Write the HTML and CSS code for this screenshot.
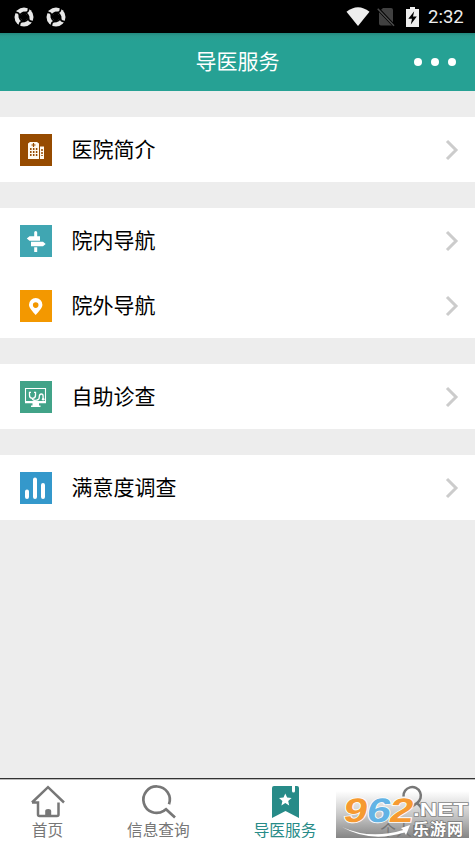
FILE: index.html
```html
<!DOCTYPE html>
<html lang="zh-CN">
<head>
<meta charset="utf-8">
<title>导医服务</title>
<link rel="stylesheet" href="styles.css">
</head>
<body>
<div class="app">
  <div class="status">
    <svg class="notif" viewBox="0 0 20 20"><use href="#swirl"/></svg>
    <svg class="notif" viewBox="0 0 20 20"><g id="swirl"><circle cx="10" cy="10" r="9.5" fill="#e8e8e8"/><path d="M10 4.8L15 10L10 15.2L5 10Z" fill="#000"/><g fill="none" stroke="#000" stroke-width="1.7"><path id="gap" d="M5.500 10.500Q6 5 12.500 5.300Q15 4.500 14.500 0"/><use href="#gap" transform="rotate(90 10 10)"/><use href="#gap" transform="rotate(180 10 10)"/><use href="#gap" transform="rotate(270 10 10)"/></g></g></svg>
    <span class="spacer"></span>
    <svg class="wifi" viewBox="0 0 24 19"><path d="M.5 4.8Q12-4.3 23.5 4.8L12 19Z" fill="#eee"/></svg>
    <svg class="sim" viewBox="0 0 18 20"><path d="M6 1H14Q16 1 16 3V16L3 3.8Z M2 5L15.5 18.5H4Q2 18.5 2 16.5Z" fill="#414141"/><path d="M.7 1.3L17 18.7" stroke="#000" stroke-width="3"/><path d="M.7 1.8L17 18.7" stroke="#4c4c4c" stroke-width="1.5"/></svg>
    <svg class="battery" viewBox="0 0 13 20"><path d="M4 0H9V2H13V20H0V2H4Z" fill="#eee"/><path d="M8.2 4.2L2.3 11.8H6L4.8 17.4L10.8 9.4H7Z" fill="#000"/></svg>
    <span class="clock">2:32</span>
  </div>
  <header class="header">
    <h1>导医服务</h1>
    <div class="more"><i></i><i></i><i></i></div>
  </header>
  <main class="content">
    <section class="group">
      <div class="row">
        <svg class="icon brown" viewBox="0 0 32 32"><path d="M8 25V9.5L10 8H17L19 9.5V25ZM20 25V12.5H24V25Z" fill="#fffaf0"/><path d="M13.5 9v4M11.5 11h4" stroke="#964b00" stroke-width="1.2"/><path d="M10.8 14v8M13.7 14v8M16.6 14v8M22 15v7" stroke="#964b00" stroke-width="1.5" stroke-dasharray="2 1"/></svg>
        <span class="label">医院简介</span>
        <svg class="arrow" viewBox="0 0 14 22"><path d="M2 2L11 11L2 20"/></svg>
      </div>
    </section>
    <section class="group">
      <div class="row">
        <svg class="icon cyan" viewBox="0 0 32 32"><path d="M14.2 7.5Q14.2 6 15.7 6T17.2 7.5V11.3H20V15.7H9.5L6.8 13.5L9.5 11.3H14.2ZM11 16.7H23L25.7 19L23 21.2H11ZM14.2 22.2H17.2V27H14.2Z" fill="#fff"/></svg>
        <span class="label">院内导航</span>
        <svg class="arrow" viewBox="0 0 14 22"><path d="M2 2L11 11L2 20"/></svg>
      </div>
      <div class="row">
        <svg class="icon orange" viewBox="0 0 32 32"><path fill-rule="evenodd" d="M15.7 25C12.7 21.4 9 18 9 14.7A6.7 6.7 0 0 1 22.4 14.7C22.4 18 18.7 21.4 15.7 25ZM15.7 12.3A2.8 2.8 0 1 0 15.7 17.9A2.8 2.8 0 1 0 15.7 12.3Z" fill="#fff"/></svg>
        <span class="label">院外导航</span>
        <svg class="arrow" viewBox="0 0 14 22"><path d="M2 2L11 11L2 20"/></svg>
      </div>
    </section>
    <section class="group">
      <div class="row">
        <svg class="icon green" viewBox="0 0 32 32"><path d="M5.5 7.5H25.5V20.5H5.5Z" fill="none" stroke="#fff" stroke-width="1.1"/><path d="M5 20H26V22.3H19V24.5H20.5V26H11V24.5H12.5V22.3H5Z" fill="#fff"/><path d="M11 11.3H9.5V14.3Q9.5 17.4 12.5 17.4T15.5 14.3V11.3H14M12.5 17.4V18.3Q14 20 17 19Q19.3 18.7 19.3 16V15.3Q19.5 13 21.3 13T23.1 15V18" fill="none" stroke="#fff" stroke-width="1.3"/><circle cx="23.2" cy="18.2" r="1.3" fill="#fff"/></svg>
        <span class="label">自助诊查</span>
        <svg class="arrow" viewBox="0 0 14 22"><path d="M2 2L11 11L2 20"/></svg>
      </div>
    </section>
    <section class="group">
      <div class="row">
        <svg class="icon blue" viewBox="0 0 32 32"><path d="M7 19.4V25M15 7.4V25M23 13V25" stroke="#fff" stroke-width="4" stroke-linecap="round"/></svg>
        <span class="label">满意度调查</span>
        <svg class="arrow" viewBox="0 0 14 22"><path d="M2 2L11 11L2 20"/></svg>
      </div>
    </section>
  </main>
  <nav class="tabs">
    <div class="tab first">
      <svg viewBox="0 0 36 36"><path d="M2 18.5L18 3.2L34 18.5M2 18.5H8V30.5Q8 32 9.5 32H27Q28.5 32 28.5 30.5V18.5" fill="none" stroke="#777" stroke-width="2.5"/><path d="M15.2 31V27Q15.2 25 18.2 25T21.2 27V31Z" fill="#777"/></svg>
      <span>首页</span>
    </div>
    <div class="tab">
      <svg viewBox="0 0 36 36"><path d="M29 20.2A13.2 13.2 0 1 0 23.7 26.8L26 25.2L35 33.6" fill="none" stroke="#777" stroke-width="2.7"/></svg>
      <span>信息查询</span>
    </div>
    <div class="tab active">
      <svg viewBox="0 0 36 36"><path d="M7 2H25V7Q25 8.5 26.5 8.5T28 7V2H30Q32 2 32 4V34L18.5 27L5 34V4Q5 2 7 2Z" fill="#278b88"/><path d="M18.3 9.5L20.1 13.6L24.6 14L21.2 17L22.2 21.4L18.3 19.1L14.4 21.4L15.4 17L12 14L16.5 13.6Z" fill="#fff"/></svg>
      <span>导医服务</span>
    </div>
    <div class="tab">
      <svg viewBox="0 0 36 36"><path d="M9.5 12.5A8.7 8.7 0 1 1 23 19Q18 23 8 28M23 19Q29 24 31 33" fill="none" stroke="#777" stroke-width="2.5"/></svg>
      <span>个人中心</span>
    </div>
  </nav>
  <svg class="watermark" viewBox="0 0 134 47">
    <defs><linearGradient id="shade" x2="0" y2="1"><stop stop-color="#777" stop-opacity="0"/><stop offset=".5" stop-color="#777" stop-opacity=".4"/><stop offset="1" stop-color="#747474" stop-opacity=".88"/></linearGradient></defs>
    <path d="M0 0H133V47H0Z" fill="url(#shade)"/>
    <g class="digits"><text transform="translate(6 31) skewX(-10)" textLength="24" lengthAdjust="spacingAndGlyphs" fill="#f69a31">9</text><text transform="translate(29.5 31) skewX(-10)" textLength="24" lengthAdjust="spacingAndGlyphs" fill="#62b3e5">6</text><text transform="translate(52 31) skewX(-10)" textLength="24" lengthAdjust="spacingAndGlyphs" fill="#f69a31">2</text></g>
    <path d="M6 36Q34 49 67 39L65 37L74 34L70 44L68.500 41.500Q34 52 6 36Z" fill="#fff"/>
    <text class="net" x="77" y="25" textLength="55" lengthAdjust="spacingAndGlyphs">.NET</text>
    <text class="site" x="77" y="43.500" textLength="50">乐游网</text>
  </svg>
</div>
</body>
</html>
```
FILE: styles.css
```css
* { box-sizing: border-box; }
body { margin: 0; font-family: "Noto Sans CJK SC", sans-serif; }
.app { position: relative; width: 475px; height: 844px; display: flex; flex-direction: column; background: #ededed; overflow: hidden; }
.status { height: 33px; background: #000; display: flex; align-items: center; padding: 0 11px 0 14px; flex: none; }
.notif { width: 20px; height: 20px; margin-right: 12px; }
.spacer { flex: 1; }
.wifi { width: 24px; height: 19px; }
.sim { width: 18px; height: 20px; margin-left: 7px; }
.battery { width: 13px; height: 20px; margin: 0 9px 0 11px; }
.clock { width: 36px; color: #eee; font: 18.5px/33px Roboto, sans-serif; padding-top: 2px; white-space: nowrap; }
.header { height: 58px; background: linear-gradient(#23897e 0, #2a9b8f 3px, #26a194 8px); position: relative; flex: none; }
h1 { margin: 0; color: #fff; font-size: 21px; font-weight: 400; line-height: 54px; text-align: center; }
.more { position: absolute; right: 19px; top: 25px; display: flex; gap: 9px; }
.more i { width: 8px; height: 8px; border-radius: 50%; background: #fff; }
.content { flex: 1; padding-top: 26px; display: flex; flex-direction: column; gap: 26.2px; }
.group { background: #fff; }
.row { height: 64.8px; display: flex; align-items: center; padding: 1.4px 16px 0 20px; }
.icon { width: 32px; height: 32px; margin-right: 19.5px; }
.brown { background: #964b00; }
.cyan { background: #40a6b2; }
.orange { background: #f39800; }
.green { background: #41a388; }
.blue { background: #3498cb; }
.label { flex: 1; color: #000; font-size: 21px; line-height: 30px; padding-bottom: 4px; }
.arrow { width: 14px; height: 22px; fill: none; stroke: #ccc; stroke-width: 3; }
.tabs { height: 66px; flex: none; display: flex; background: #fff; border-top: 1px solid #333; box-shadow: inset 0 1px #bbb; }
.tab { flex: 1; display: flex; flex-direction: column; align-items: center; padding-top: 5px; color: #777; font-size: 15.7px; line-height: 20px; }
.first { flex: 0 0 95px; }
.tab svg { width: 36px; height: 36px; }
.active { color: #278b88; }
.watermark { position: absolute; left: 336px; top: 791px; width: 134px; height: 47px; }
.digits { font: bold 34px "Liberation Sans", sans-serif; stroke: #fff; stroke-width: 1.6px; paint-order: stroke; }
.net { font: bold 19px "Liberation Sans", sans-serif; fill: #fff; stroke: #888; stroke-width: 1.5px; paint-order: stroke; }
.site { font: bold 16px "Noto Sans CJK SC", sans-serif; fill: #fff; stroke: #777; stroke-width: 1.5px; paint-order: stroke; }
```
